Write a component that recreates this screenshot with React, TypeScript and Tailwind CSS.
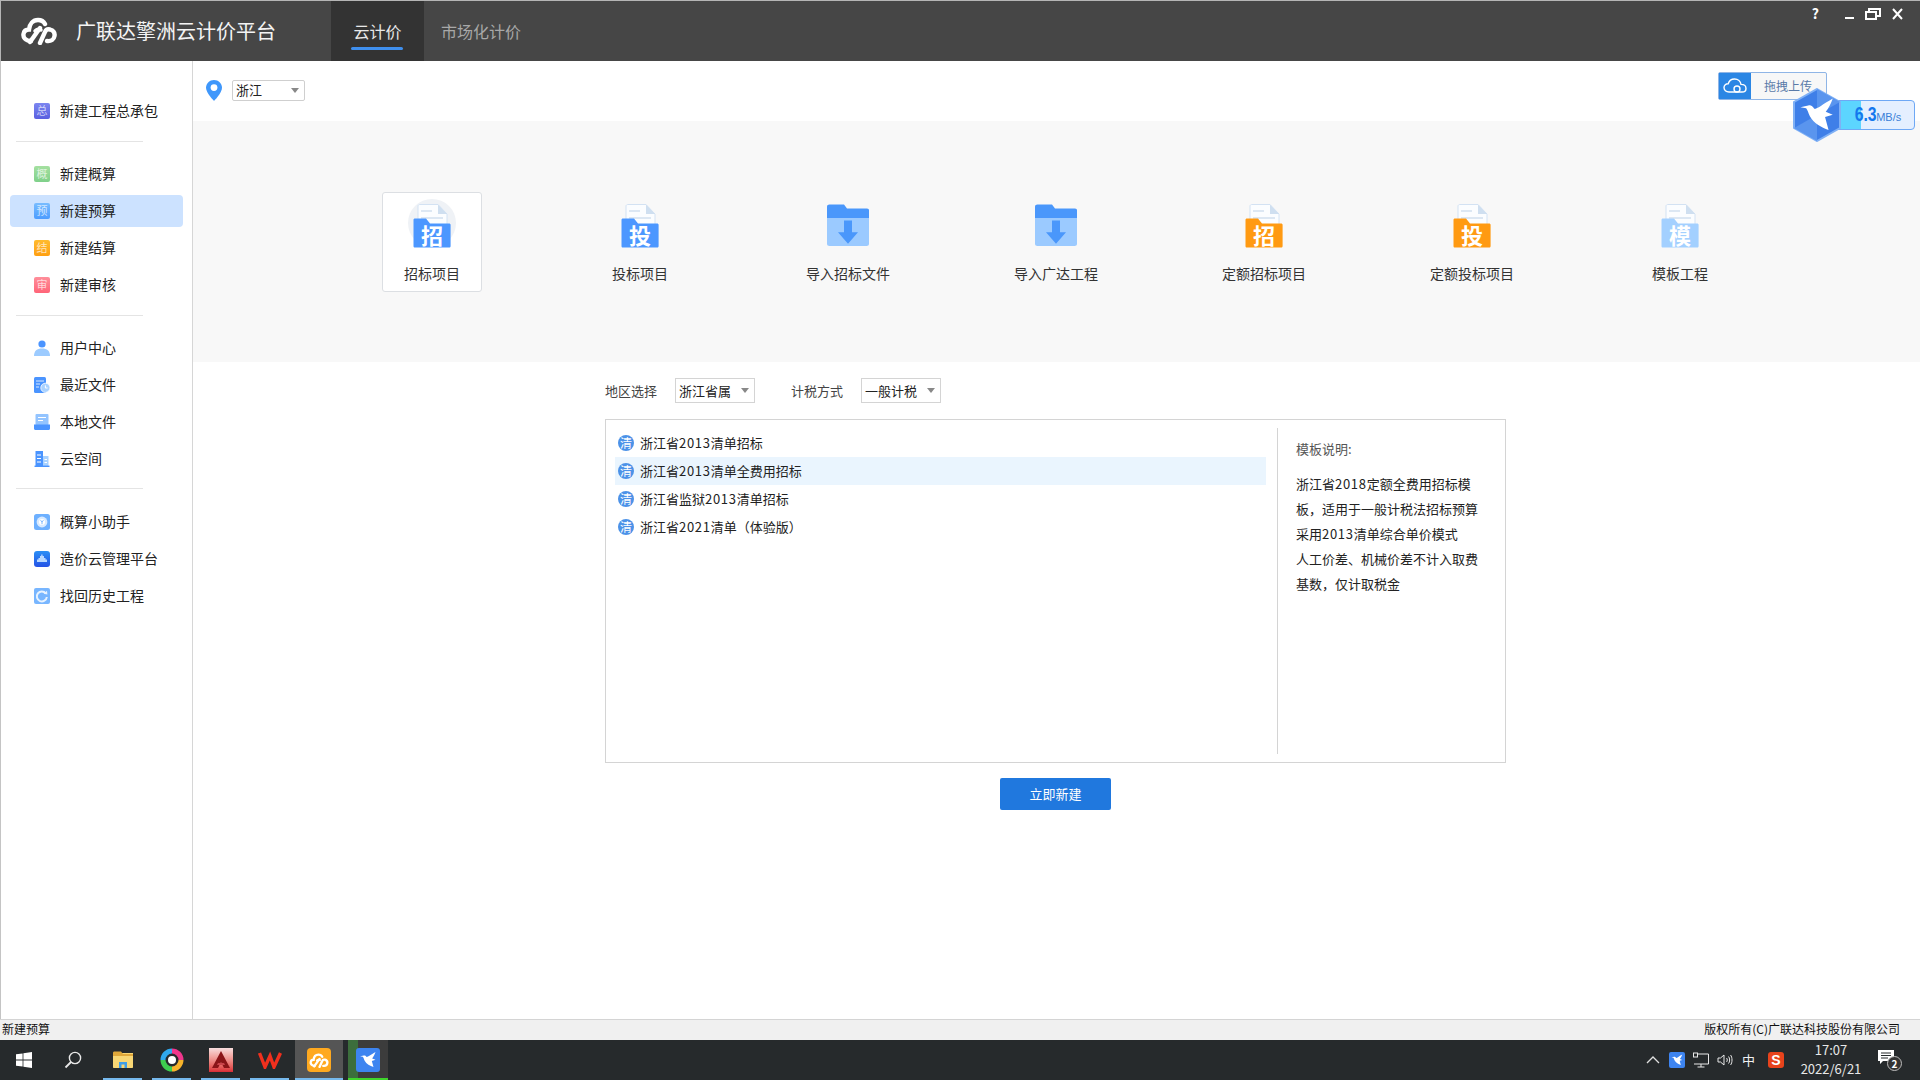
const FONT = "font-['Microsoft_YaHei','Noto_Sans_CJK_SC','Noto_Sans',sans-serif]";

const navGroups = [
  [{ label: '新建工程总承包', char: '总', bg: 'from-[#7c86f0] to-[#5a5fe0]' }],
  [
    { label: '新建概算', char: '概', bg: 'from-[#a4e0a0] to-[#7fd08a]' },
    { label: '新建预算', char: '预', bg: 'from-[#78bcff] to-[#4c9cff]', active: true },
    { label: '新建结算', char: '结', bg: 'from-[#ffbb2e] to-[#ff9f10]' },
    { label: '新建审核', char: '审', bg: 'from-[#ff8e9a] to-[#ff6478]' },
  ],
  [
    { label: '用户中心', icon: 'user' },
    { label: '最近文件', icon: 'recent' },
    { label: '本地文件', icon: 'local' },
    { label: '云空间', icon: 'cloud' },
  ],
  [
    { label: '概算小助手', icon: 'helper' },
    { label: '造价云管理平台', icon: 'manage' },
    { label: '找回历史工程', icon: 'history' },
  ],
];

const projects = [
  { label: '招标项目', type: 'doc', char: '招', color: '#4c97ff', selected: true },
  { label: '投标项目', type: 'doc', char: '投', color: '#4c97ff' },
  { label: '导入招标文件', type: 'import' },
  { label: '导入广达工程', type: 'import' },
  { label: '定额招标项目', type: 'doc', char: '招', color: '#ff9a12' },
  { label: '定额投标项目', type: 'doc', char: '投', color: '#ff9a12' },
  { label: '模板工程', type: 'doc', char: '模', color: '#a3d0ff' },
];

const templates = ['浙江省2013清单招标', '浙江省2013清单全费用招标', '浙江省监狱2013清单招标', '浙江省2021清单（体验版）'];

const description = [
  '浙江省2018定额全费用招标模',
  '板，适用于一般计税法招标预算',
  '采用2013清单综合单价模式',
  '人工价差、机械价差不计入取费',
  '基数，仅计取税金',
];

// YaHei's digits run wider than Noto's
function Spaced({ text }: { text: string }) {
  return (
    <>
      {text.split(/(\d+)/).map((part, i) =>
        /\d/.test(part) ? (
          <span key={i} className="tracking-[0.7px]">{part}</span>
        ) : (
          part
        )
      )}
    </>
  );
}

function Logo({ className, color = '#fff' }: { className: string; color?: string }) {
  return (
    <svg viewBox="0 0 36 28" className={className} fill="none" stroke={color} strokeWidth="4.4" strokeLinecap="round">
      <path d="M10 24 C4 24 2 20 2.5 17 C3 14 5 12.5 8 12.5 C8.5 7 12 3 17 3 C20.5 3 23 5 24 7" />
      <path d="M9 25 L19 11" />
      <path d="M19 26 L24 15 C25 12.5 27 12 29 12.5 C32.5 13.5 34 16 33.5 19 C33 22.5 30 24.5 26 24" />
      <path d="M14 14 C16 12 18 12 20 13" strokeWidth="3.5" />
    </svg>
  );
}

function Bird({ className }: { className: string }) {
  return (
    <svg viewBox="0 0 24 24" className={className} fill="#fff">
      <path d="M2.5 7.5 L7 6.6 C8.5 6.2 9.5 7 10.4 8.4 C12 8.6 15 6 21 2.5 C20 5.5 18.6 8 17 10.2 L21 11.8 L16.6 13.2 L18.6 20.5 C14.5 19 10 16.5 8 12.8 C7 11 6.6 9 5.8 8.2 Z" />
    </svg>
  );
}

function NavIcon({ name }: { name: string }) {
  if (name === 'user') {
    return (
      <svg viewBox="0 0 16 16" className="h-4 w-4">
        <circle cx="8" cy="4" r="3.6" fill="#4a94ff" />
        <path d="M0 16 C0 11 3 8.6 8 8.6 C13 8.6 16 11 16 16 Z" fill="#9ccbff" />
      </svg>
    );
  }
  if (name === 'recent') {
    return (
      <svg viewBox="0 0 16 16" className="h-4 w-4">
        <rect x="0" y="0" width="12" height="16" rx="1.5" fill="#4a94ff" />
        <path d="M2 4 H10 M2 7 H6 M2 10 H5" stroke="#d8e9ff" strokeWidth="1" />
        <circle cx="11.4" cy="10.8" r="4.6" fill="#a9d2ff" stroke="#fff" strokeWidth="0.8" />
        <path d="M11.4 8.4 V11 H13.6" stroke="#fff" strokeWidth="1" fill="none" />
      </svg>
    );
  }
  if (name === 'local') {
    return (
      <svg viewBox="0 0 16 16" className="h-4 w-4">
        <rect x="1.5" y="0" width="13" height="12" rx="1" fill="#93c4ff" />
        <path d="M4 3.5 H12 M4 6.5 H9" stroke="#fff" strokeWidth="1.2" />
        <path d="M0 10.5 H16 V14.5 C16 15.4 15.4 16 14.5 16 H1.5 C0.6 16 0 15.4 0 14.5 Z" fill="#4a94ff" />
      </svg>
    );
  }
  if (name === 'cloud') {
    return (
      <svg viewBox="0 0 16 16" className="h-4 w-4">
        <rect x="1.5" y="0" width="7.5" height="15" fill="#4a94ff" />
        <rect x="9" y="5" width="5.5" height="10" fill="#a9d2ff" />
        <rect x="0.5" y="14.6" width="15" height="1.4" fill="#4a94ff" />
        <path d="M3 4 H7 M3 7.5 H7 M3 11 H7 M10.5 8.5 H13 M10.5 11.5 H13" stroke="#fff" strokeWidth="1.2" />
      </svg>
    );
  }
  if (name === 'helper') {
    return (
      <svg viewBox="0 0 16 16" className="h-4 w-4">
        <rect width="16" height="16" rx="2.5" fill="#6db0ff" />
        <circle cx="8" cy="8" r="5.4" fill="#d8eaff" />
        <circle cx="8" cy="8" r="3" fill="#fff" />
        <path d="M6.6 6.2 L8 8 L9.4 6.2 M8 8 V10.2" stroke="#6db0ff" strokeWidth="0.9" fill="none" />
      </svg>
    );
  }
  if (name === 'manage') {
    return (
      <svg viewBox="0 0 16 16" className="h-4 w-4">
        <defs>
          <linearGradient id="mg" x1="0" y1="0" x2="0" y2="1">
            <stop offset="0" stopColor="#2b8ff5" />
            <stop offset="1" stopColor="#2452e6" />
          </linearGradient>
        </defs>
        <rect width="16" height="16" rx="3" fill="url(#mg)" />
        <path d="M3 11 V8.5 H4.5 V7 H6 V5 H7.2 V3.6 H8.6 V5 H10 V7 H11.5 V8.5 H13 V11 Z" fill="#b8d8ff" />
      </svg>
    );
  }
  return (
    <svg viewBox="0 0 16 16" className="h-4 w-4">
      <rect width="16" height="16" rx="2" fill="#78b6ff" />
      <path d="M11.8 5.4 A5 5 0 1 0 12.8 9" fill="none" stroke="#e8f3ff" strokeWidth="2" />
      <path d="M9.6 5.8 L13.4 6.6 L13 2.8 Z" fill="#e8f3ff" />
    </svg>
  );
}

function DocFolder({ char, color, selected }: { char: string; color: string; selected?: boolean }) {
  return (
    <div className="relative h-[44px] w-[38px]">
      {selected && <span className="absolute -top-[5px] -left-[5px] h-[48px] w-[48px] rounded-full bg-[#eff2f6]" />}
      <svg viewBox="0 0 38 44" className="absolute inset-0 h-full w-full">
        <path d="M5 2 C5 1 6 0.5 7 0.5 H25 L34 10 V24 H5 Z" fill="#fbfdff" stroke="#d3e2f3" strokeWidth="1" />
        <path d="M25 0.5 V10 H34 Z" fill="#cfdff0" />
        <path d="M8 7 H19 M8 14 H30" stroke="#dce7f3" strokeWidth="2" />
        <path d="M0.5 16 C0.5 15 1 14.5 2 14.5 H13 L17 19.5 H36 C37 19.5 37.6 20 37.6 21 V42 C37.6 43 37 43.6 36 43.6 H2 C1 43.6 0.5 43 0.5 42 Z" fill={color} />
      </svg>
      <span className="absolute inset-x-0 top-[17px] text-center text-[22px] leading-[26px] font-bold text-white">{char}</span>
    </div>
  );
}

function ImportFolder() {
  return (
    <svg viewBox="0 0 42 46" className="h-[42px] w-[42px]" preserveAspectRatio="none">
      <path d="M0 3 C0 1.4 1 0.5 2.5 0.5 H17 L20 5 H40 C41.2 5 42 5.8 42 7 V16 H0 Z" fill="#4a97fb" />
      <path d="M0 15.5 H42 V43.5 C42 45 41 46 39.5 46 H2.5 C1 46 0 45 0 43.5 Z" fill="#9bcaff" />
      <path d="M17 18 H25 V31 H31 L21 43.5 L11 31 H17 Z" fill="#4a97fb" />
    </svg>
  );
}

function SelectBox({ value, width }: { value: string; width: string }) {
  return (
    <div className={`flex h-[25px] items-center justify-between border border-[#d4d4d4] bg-white pr-[5px] pl-[3px] text-[13px] text-[#222] ${width}`}>
      <span>{value}</span>
      <span className="h-0 w-0 border-x-[4px] border-t-[5px] border-x-transparent border-t-[#888]" />
    </div>
  );
}

const taskIcons = [
  {
    w: 'w-[49px]',
    icon: (
      <svg viewBox="0 0 22 18" className="h-[18px] w-[22px]">
        <path d="M1 2 H21 V16 C21 16.6 20.6 17 20 17 H2 C1.4 17 1 16.6 1 16 Z" fill="#f8d775" />
        <path d="M1 2 C1 1 1.5 0.5 2.5 0.5 H9 L11 3 H21 V5 H1 Z" fill="#e0a83a" />
        <path d="M7 17 V11 H15 V17 H12.5 V13.5 H9.5 V17 Z" fill="#3f9ee8" />
      </svg>
    ),
  },
  {
    w: 'w-[49px]',
    icon: (
      <svg viewBox="0 0 24 24" className="h-[24px] w-[24px]" fill="none" strokeWidth="5">
        <path d="M12 3 A9 9 0 0 1 21 12" stroke="#f0368c" />
        <path d="M21 12 A9 9 0 0 1 12 21" stroke="#f7b32b" />
        <path d="M12 21 A9 9 0 0 1 3 12" stroke="#3ecf4f" />
        <path d="M3 12 A9 9 0 0 1 12 3" stroke="#2fa8ef" />
        <circle cx="12" cy="12" r="4" fill="#fff" stroke="none" />
      </svg>
    ),
  },
  {
    w: 'w-[49px]',
    icon: (
      <div className="h-[24px] w-[24px] bg-linear-to-b from-[#f6dede] to-[#d92a36]">
        <svg viewBox="0 0 24 24" className="h-[24px] w-[24px]">
          <path d="M12 3 L21 20 H15 L12 14 L9 20 H3 Z" fill="#8a1518" />
          <path d="M9 15 H15 L16 17 H8 Z" fill="#c9444a" />
        </svg>
      </div>
    ),
  },
  {
    w: 'w-[49px]',
    icon: (
      <svg viewBox="0 0 24 18" className="h-[18px] w-[24px]" fill="none" stroke="#f0301e" strokeWidth="3.4">
        <path d="M1.5 2 L7 16 L12 5 L16 16 L22.5 2" />
      </svg>
    ),
  },
];

export default function App() {
  return (
    <div className={`flex h-[1080px] w-[1920px] flex-col overflow-hidden bg-white ${FONT}`}>
      {/* title bar */}
      <header className="relative flex h-[61px] shrink-0 items-stretch border-t border-l border-[#b5b5b5] bg-[#464646] text-white">
        <div className="flex w-[330px] items-center pl-[20px]">
          <Logo className="h-[28px] w-[36px]" />
          <span className="ml-[19px] text-[20px] text-[#f4f4f4]">广联达擎洲云计价平台</span>
        </div>
        <div className="relative flex w-[93px] items-center justify-center bg-[#333333] text-[16px] text-[#e8e8e8]">
          云计价
          <span className="absolute bottom-[11px] left-[20px] h-[3px] w-[52px] rounded-full bg-[#3f8fee]" />
        </div>
        <div className="flex items-center pl-[17px] text-[16px] text-[#a8a8a8]">市场化计价</div>
        <div className="ml-auto flex items-start pt-[3px] pr-[16px] text-white">
          <span className="mr-[25px] text-[14px] leading-[18px] font-bold">?</span>
          <svg viewBox="0 0 60 14" className="mt-[3px] h-[14px] w-[60px]" fill="none" stroke="#fff" strokeWidth="2">
            <path d="M1 11 H10" />
            <path d="M22 5 H32 V12 H22 Z M25 5 V2 H36 V9 H32" />
            <path d="M49 2 L58 12 M58 2 L49 12" />
          </svg>
        </div>
      </header>

      <div className="flex min-h-0 flex-1 border-l border-[#c4c4c4]">
        {/* sidebar */}
        <aside className="w-[192px] shrink-0 border-r border-[#d6d6d6] pt-[31px]">
          {navGroups.map((group, gi) => (
            <div key={gi}>
              {gi > 0 && <div className={`ml-[15px] h-px w-[127px] bg-[#e4e4e4] ${gi === 1 ? 'mt-[12px] mb-[13px]' : gi === 2 ? 'mt-[12px] mb-[13px]' : 'mt-[11px] mb-[14px]'}`} />}
              {group.map((item: any) => (
                <div key={item.label} className="flex h-[37px] items-center">
                  <div className={`ml-[9px] flex h-[32px] w-[173px] items-center rounded-[4px] pl-[24px] ${item.active ? 'bg-[#cce2ff]' : ''}`}>
                    {item.icon ? (
                      <NavIcon name={item.icon} />
                    ) : (
                      <span className={`flex h-4 w-4 items-center justify-center rounded-[2px] bg-linear-to-b text-[11px] leading-none text-white/70 ${item.bg}`}>{item.char}</span>
                    )}
                    <span className="ml-[10px] text-[14px] text-[#222]">{item.label}</span>
                  </div>
                </div>
              ))}
            </div>
          ))}
        </aside>

        <main className="relative min-w-0 flex-1">
          {/* location row */}
          <div className="flex h-[60px] items-center pl-[13px]">
            <svg viewBox="0 0 16 21" className="h-[21px] w-[16px] -translate-y-px">
              <path d="M8 0 C3.6 0 0 3.4 0 7.8 C0 13 8 21 8 21 C8 21 16 13 16 7.8 C16 3.4 12.4 0 8 0 Z" fill="#3f97fb" />
              <circle cx="8" cy="7.6" r="3.4" fill="#fff" />
            </svg>
            <div className="ml-[10px] flex h-[21px] w-[73px] -translate-y-px items-center justify-between rounded-[2px] border border-[#cfcfcf] pr-[5px] pl-[3px] text-[13px] text-[#222]">
              <span>浙江</span>
              <span className="h-0 w-0 border-x-[4px] border-t-[5px] border-x-transparent border-t-[#888]" />
            </div>
            <div className="mr-[93px] ml-auto flex h-[28px] w-[109px] -translate-y-[5px] items-stretch rounded-[2px] border border-[#8fb5e6] bg-[#f7f7f7]">
              <div className="flex w-[32px] items-center justify-center bg-[#2b86e4]">
                <svg viewBox="0 0 24 16" className="h-[16px] w-[24px]" fill="none" stroke="#fff" strokeWidth="1.4">
                  <path d="M6 14 C3 14 1 12 1 9.6 C1 7.2 3 5.6 5.2 5.8 C6 3 8.6 1 11.6 1 C15 1 17.6 3.4 18 6.4 C20.6 6.4 23 7.8 23 10.4 C23 12.8 21 14 19 14 Z" />
                  <circle cx="14" cy="11" r="3" />
                </svg>
              </div>
              <span className="flex flex-1 items-center pl-[13px] text-[12px] text-[#5a7aa8]">拖拽上传</span>
            </div>
          </div>

          {/* project type strip */}
          <section className="flex h-[241px] bg-[#f8f8f8] pt-[71px] pl-[135px]">
            {projects.map((project) => (
              <div key={project.label} className="flex w-[208px] justify-center">
                <div className={`flex h-[100px] w-[100px] flex-col items-center rounded-[3px] border ${project.selected ? 'border-[#dcdfe3] bg-white' : 'border-transparent'}`}>
                  <div className="flex h-[70px] items-start pt-[11px]">
                    {project.type === 'doc' ? (
                      <DocFolder char={project.char as string} color={project.color as string} selected={project.selected} />
                    ) : (
                      <ImportFolder />
                    )}
                  </div>
                  <span className="text-[14px] leading-[20px] text-[#333]">{project.label}</span>
                </div>
              </div>
            ))}
          </section>

          {/* template picker */}
          <section className="ml-[412px] w-[901px]">
            <div className="flex h-[57px] items-center text-[13px] text-[#444]">
              <span className="w-[70px]">地区选择</span>
              <SelectBox value="浙江省属" width="w-[80px]" />
              <span className="ml-[36px] w-[70px]">计税方式</span>
              <SelectBox value="一般计税" width="w-[80px]" />
            </div>
            <div className="flex h-[344px] border border-[#d4d4d4] py-[8px]">
              <ul className="w-[672px] border-r border-[#d4d4d4] pt-px pr-[11px] pl-[9px] text-[13px] text-[#222]">
                {templates.map((name, i) => (
                  <li key={name} className={`flex h-[28px] items-center pl-[3px] ${i === 1 ? 'bg-[#eaf5fe]' : ''}`}>
                    <span className="flex h-4 w-4 items-center justify-center rounded-full bg-[#4c92e8] text-[12px] leading-none text-white">清</span>
                    <span className="ml-[6px]"><Spaced text={name} /></span>
                  </li>
                ))}
              </ul>
              <div className="flex-1 pl-[18px] text-[13px]">
                <p className="pt-[11px] leading-[20px] text-[#555]">模板说明:</p>
                <div className="mt-[12px] leading-[25px] whitespace-nowrap text-[#222]">
                  {description.map((line) => (
                    <p key={line}><Spaced text={line} /></p>
                  ))}
                </div>
              </div>
            </div>
            <div className="mt-[15px] flex justify-center">
              <button className="h-[32px] w-[111px] rounded-[2px] bg-[#2078de] text-[13px] text-white">立即新建</button>
            </div>
          </section>

          {/* floating download meter */}
          <div className="absolute top-[27px] right-[5px] flex items-center">
            <div className="relative z-10 mr-[-9px] flex h-[54px] w-[52px] items-center justify-center">
              <svg viewBox="0 0 50 54" className="absolute inset-0 h-full w-full">
                <path d="M25 1 L48 14 V40 L25 53 L2 40 V14 Z" fill="#3f7fe8" stroke="#7fb0f5" strokeWidth="2" />
                <path d="M25 1 L48 14 L25 27 Z" fill="#5a95ee" />
                <path d="M2 40 L25 27 V53 Z" fill="#5a95ee" />
              </svg>
              <Bird className="relative h-[42px] w-[42px]" />
            </div>
            <div className="flex h-[30px] w-[81px] items-stretch overflow-hidden rounded-[4px] border border-[#6ea8f5] bg-[#e4efff]">
              <span className="w-[26px] shrink-0 bg-[#5cd5ff]" />
              <span className="flex items-baseline pt-[1px] font-['Liberation_Sans','Noto_Sans',sans-serif] text-[#1478ee]">
                <b className="-ml-[10px] scale-x-75 text-[21px] leading-[24px]">6.3</b>
                <span className="-ml-[4px] text-[11px] text-[#3a7fd8]">MB/s</span>
              </span>
            </div>
          </div>
        </main>
      </div>

      {/* status bar */}
      <div className="flex h-[21px] shrink-0 items-center justify-between border-t border-[#d4d4d4] bg-[#f0f0f0] pr-[20px] pb-[2px] pl-[2px] text-[12px] text-[#111]">
        <span>新建预算</span>
        <span>版权所有(C)广联达科技股份有限公司</span>
      </div>

      {/* windows taskbar */}
      <footer className="flex h-[40px] shrink-0 items-stretch bg-[#262a2c] text-white">
        <div className="flex w-[48px] items-center justify-center">
          <svg viewBox="0 0 16 16" className="h-4 w-4" fill="#fff">
            <path d="M0 2.3 L6.6 1.4 V7.6 H0 Z M7.4 1.3 L16 0 V7.6 H7.4 Z M0 8.4 H6.6 V14.6 L0 13.7 Z M7.4 8.4 H16 V16 L7.4 14.7 Z" />
          </svg>
        </div>
        <div className="flex w-[50px] items-center justify-center">
          <svg viewBox="0 0 18 18" className="h-[18px] w-[18px]" fill="none" stroke="#e8e8e8" strokeWidth="1.4">
            <circle cx="11" cy="7" r="5.6" />
            <path d="M7 11 L1.5 16.5" strokeWidth="1.8" />
          </svg>
        </div>
        {taskIcons.map((task, i) => (
          <div key={i} className={`relative flex items-center justify-center ${task.w}`}>
            {task.icon}
            <span className="absolute inset-x-[5px] bottom-0 h-[2px] bg-[#76b9ed]" />
          </div>
        ))}
        <div className="relative ml-px flex w-[48px] items-center justify-center bg-[#555]">
          <div className="flex h-[24px] w-[24px] items-center justify-center rounded-[4px] bg-[#ffa91f]">
            <Logo className="h-[15px] w-[20px]" />
          </div>
          <span className="absolute inset-x-0 bottom-0 h-[2px] bg-[#76b9ed]" />
        </div>
        <div className="relative ml-[5px] flex w-[40px] items-center justify-center bg-[#3c3c3c]">
          <span className="absolute inset-y-0 left-0 w-[10px] bg-[#3c6e3c]" />
          <div className="relative flex h-[24px] w-[24px] items-center justify-center rounded-[3px] bg-[#3d84f0]">
            <Bird className="h-[20px] w-[20px]" />
          </div>
          <span className="absolute inset-x-0 bottom-0 h-[2px] bg-[#3fd52c]" />
        </div>

        <div className="ml-auto flex items-center pr-[18px]">
          <svg viewBox="0 0 14 8" className="mr-[9px] h-[8px] w-[14px]" fill="none" stroke="#e0e0e0" strokeWidth="1.3">
            <path d="M1 7 L7 1 L13 7" />
          </svg>
          <div className="mr-[8px] flex h-4 w-4 items-center justify-center rounded-[2px] bg-[#3d84f0]">
            <Bird className="h-[14px] w-[14px]" />
          </div>
          <svg viewBox="0 0 16 16" className="mr-[8px] h-4 w-4" fill="none" stroke="#e8e8e8">
            <path d="M4 2 H15.5 V12 H1 M8 12 V15 M4.5 15 H11.5" />
            <rect x="0.5" y="1" width="4" height="4" fill="#262a2c" />
          </svg>
          <svg viewBox="0 0 16 16" className="mr-[9px] h-4 w-4" fill="none" stroke="#e8e8e8">
            <path d="M1 6 H3.5 L7 3 V13 L3.5 10 H1 Z M9.5 6 C10.5 7 10.5 9 9.5 10 M11.5 4.5 C13 6 13 10 11.5 11.5 M13.5 3 C15.5 5 15.5 11 13.5 13" />
          </svg>
          <span className="mr-[13px] text-[13px] text-[#f0f0f0]">中</span>
          <span className="mr-[9px] flex h-4 w-4 items-center justify-center rounded-[3px] bg-[#e8431c] font-['Liberation_Sans',sans-serif] text-[14px] leading-none font-bold text-white">S</span>
          <div className="w-[76px] -translate-y-px text-center text-[13px] leading-[19px] text-[#e8e8e8]">
            <p>17:07</p>
            <p>2022/6/21</p>
          </div>
          <div className="relative ml-[9px] h-[22px] w-[24px]">
            <svg viewBox="0 0 16 16" className="h-4 w-4" fill="#fff">
              <path d="M0 1 H16 V12 H5 L2 15 V12 H0 Z" />
              <path d="M3 4 H13 M3 6.5 H13 M3 9 H10" stroke="#262a2c" strokeWidth="1" />
            </svg>
            <span className="absolute right-0 bottom-0 flex h-[15px] w-[15px] items-center justify-center rounded-full border border-[#bbb] bg-[#333] text-[10px] leading-none font-bold text-white">2</span>
          </div>
        </div>
      </footer>
    </div>
  );
}
